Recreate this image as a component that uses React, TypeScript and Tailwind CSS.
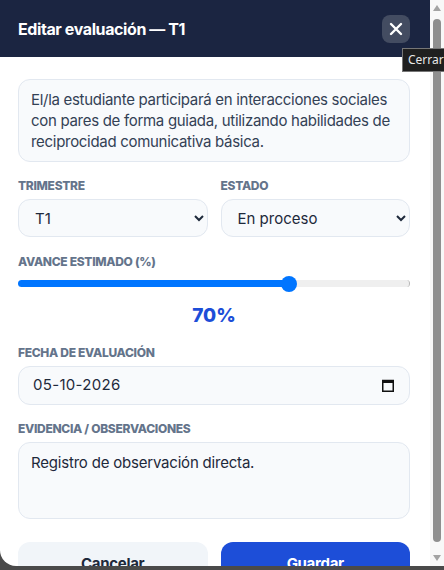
import { useState } from 'react';

export default function App() {
  const [trimestre, setTrimestre] = useState('T1');
  const [estado, setEstado] = useState('En proceso');
  const [avance, setAvance] = useState(70);
  const [evidencia, setEvidencia] = useState('Registro de observación directa.');

  const labelCls = 'block text-[12px] font-extrabold uppercase text-[#64748b] leading-4 tracking-[-0.3px]';
  const fieldCls =
    'w-full rounded-xl border border-[#e2e8f0] bg-[#f8fafc] text-[15px] text-[#1e293b] outline-none';

  return (
    <div className="relative h-[570px] w-[444px] overflow-hidden bg-[#4a4a4a] font-['Inter',sans-serif]">
      <div className="flex h-[566px]">
        {/* Modal */}
        <div className="min-w-0 flex-1 overflow-hidden rounded-bl-2xl bg-white">
          {/* Header */}
          <div className="flex h-[57px] items-center justify-between bg-[#1b2541] pl-[18px] pr-5">
            <h2 className="text-[16px] font-bold tracking-[-0.4px] text-white">Editar evaluación — T1</h2>
            <button
              type="button"
              className="flex h-7 w-7 items-center justify-center rounded-lg bg-[#434c61] text-white"
            >
              <svg width="16" height="16" viewBox="0 0 16 16" fill="none" stroke="currentColor" strokeWidth="2.4" strokeLinecap="round">
                <path d="M3 3l10 10M13 3L3 13" />
              </svg>
            </button>
          </div>

          {/* Body */}
          <div className="pl-[18px] pr-5 pt-[22px] pb-2">
            <div className="rounded-xl border border-[#e2e8f0] bg-[#f8fafc] px-3 py-[9px] text-[15px] leading-[21px] tracking-[-0.3px] text-[#334155]">
              El/la estudiante participará en interacciones sociales con pares de forma guiada, utilizando habilidades de
              reciprocidad comunicativa básica.
            </div>

            <div className="mt-4 grid grid-cols-2 gap-[13px]">
              <div>
                <label className={labelCls}>Trimestre</label>
                <select
                  value={trimestre}
                  onChange={(e) => setTrimestre(e.target.value)}
                  className={`${fieldCls} mt-[5px] h-[38px] pl-3 pr-2`}
                >
                  <option>T1</option>
                  <option>T2</option>
                  <option>T3</option>
                </select>
              </div>
              <div>
                <label className={labelCls}>Estado</label>
                <select
                  value={estado}
                  onChange={(e) => setEstado(e.target.value)}
                  className={`${fieldCls} mt-[5px] h-[38px] pl-3 pr-2`}
                >
                  <option>Pendiente</option>
                  <option>En proceso</option>
                  <option>Logrado</option>
                </select>
              </div>
            </div>

            <label className={`${labelCls} mt-[17px]`}>Avance estimado (%)</label>
            <input
              type="range"
              min={0}
              max={100}
              value={avance}
              onChange={(e) => setAvance(Number(e.target.value))}
              style={{ background: `linear-gradient(to right, #0075ff ${avance}%, #efefef ${avance}%)` }}
              className="mt-[10px] block h-[7px] w-full cursor-pointer appearance-none rounded-full border-r border-[#b8b8b8] [&::-webkit-slider-thumb]:h-[16px] [&::-webkit-slider-thumb]:w-[16px] [&::-webkit-slider-thumb]:appearance-none [&::-webkit-slider-thumb]:rounded-full [&::-webkit-slider-thumb]:bg-[#0075ff]"
            />
            <div className="mt-[17px] text-center text-[19px] font-extrabold leading-6 text-[#1d4ed8]">{avance}%</div>

            <label className={`${labelCls} mt-[17px]`}>Fecha de evaluación</label>
            <div className={`${fieldCls} mt-[5px] flex h-[39px] items-center justify-between pl-[14px] pr-[15px]`}>
              <span className="tracking-[0.3px]">05-10-2026</span>
              <svg width="12" height="13" viewBox="0 0 12 13" fill="none">
                <rect x="0.75" y="1.5" width="10.5" height="10.75" stroke="#111" strokeWidth="1.5" />
                <rect x="0.75" y="1.5" width="10.5" height="2.5" fill="#111" />
              </svg>
            </div>

            <label className={`${labelCls} mt-4`}>Evidencia / Observaciones</label>
            <textarea
              value={evidencia}
              onChange={(e) => setEvidencia(e.target.value)}
              className={`${fieldCls} mt-[5px] block h-[77px] resize-none px-3 py-[9px] leading-[21px] tracking-[-0.2px]`}
            />

            <div className="mt-[23px] grid grid-cols-2 gap-[13px]">
              <button type="button" className="h-[44px] rounded-xl bg-[#f1f5f9] text-[15px] font-bold tracking-[-0.3px] text-[#1e293b]">
                Cancelar
              </button>
              <button type="button" className="h-[44px] rounded-xl bg-[#1d4ed8] text-[15px] font-bold tracking-[-0.3px] text-white">
                Guardar
              </button>
            </div>
          </div>
        </div>

        {/* Scrollbar */}
        <div className="flex w-[14px] flex-col items-center bg-[#f8f8f8] py-[5px]">
          <svg width="8" height="6" viewBox="0 0 8 6">
            <path d="M4 0L8 6H0z" fill="#a3a3a3" />
          </svg>
          <div className="mt-[8px] mb-[13px] w-[8px] flex-1 rounded-full bg-[#8f8f8f]" />
          <svg width="8" height="6" viewBox="0 0 8 6">
            <path d="M0 0h8L4 6z" fill="#a3a3a3" />
          </svg>
        </div>
      </div>

      {/* Native-looking tooltip over the close button */}
      <div className="absolute left-[402px] top-[48px] z-10 whitespace-nowrap border border-[#767676] bg-[#1f1f1f] px-[5px] py-[3px] font-['Noto_Sans',sans-serif] text-[12px] leading-4 text-[#e8e8e8]">
        Cerrar
      </div>
    </div>
  );
}
